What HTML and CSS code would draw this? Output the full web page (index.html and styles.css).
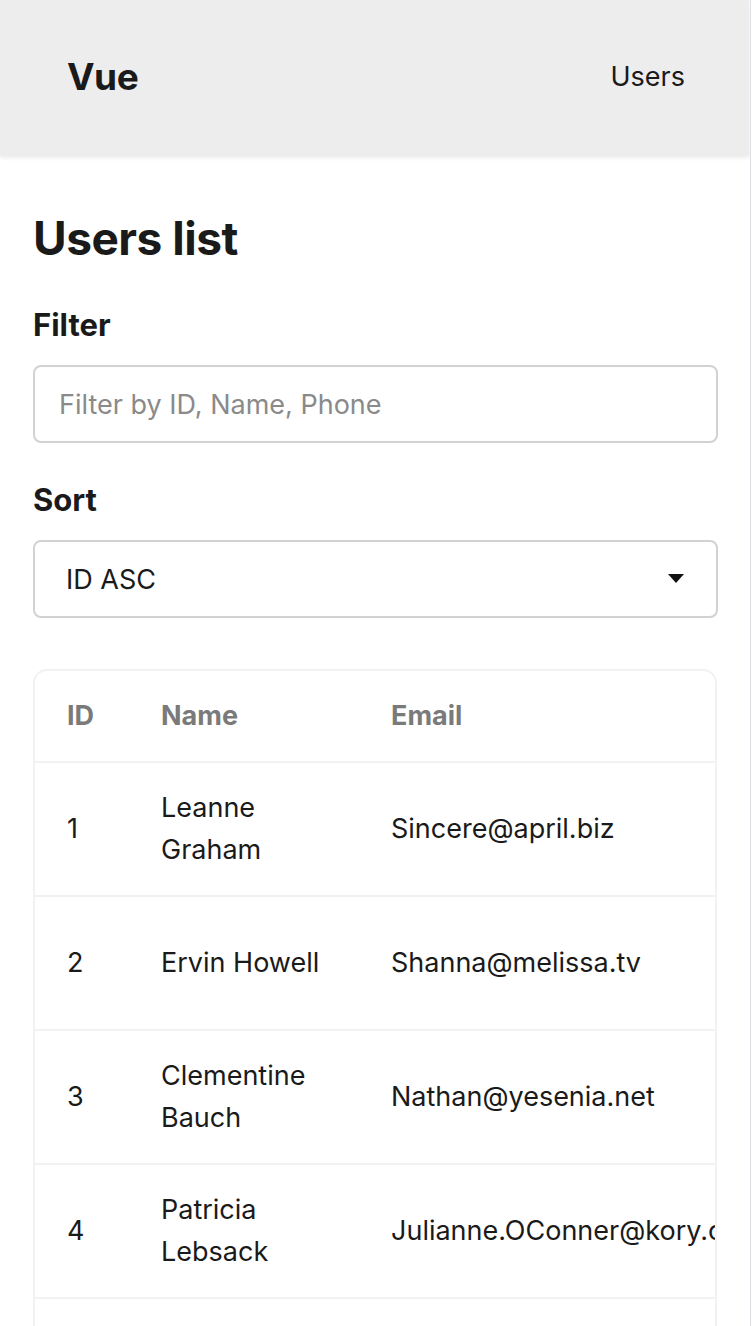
FILE: index.html
```html
<!DOCTYPE html>
<html lang="en">
<head>
<meta charset="utf-8">
<title>Users list</title>
<link rel="stylesheet" href="styles.css">
</head>
<body>
<div class="app">
  <header class="topbar">
    <div class="brand">Vue</div>
    <nav class="nav"><a class="nav-link" href="#">Users</a></nav>
  </header>
  <main class="content">
    <h1 class="title">Users list</h1>
    <div class="field">
      <label class="label" for="filter">Filter</label>
      <input class="input" id="filter" type="text" placeholder="Filter by ID, Name, Phone">
    </div>
    <div class="field">
      <label class="label" for="sort">Sort</label>
      <div class="select" id="sort">
        <span class="select-value">ID ASC</span>
        <svg class="select-arrow" width="16" height="10" viewBox="0 0 16 10"><path d="M0 0H16L8 9Z" fill="#111"/></svg>
      </div>
    </div>
    <div class="table-card">
      <table class="table">
        <colgroup><col class="c-id"><col class="c-name"><col class="c-email"><col class="c-phone"></colgroup>
        <thead>
          <tr><th>ID</th><th>Name</th><th>Email</th><th>Phone</th></tr>
        </thead>
        <tbody>
          <tr><td>1</td><td>Leanne Graham</td><td class="nowrap">Sincere@april.biz</td><td>1-770-736-8031 x56442</td></tr>
          <tr><td>2</td><td>Ervin Howell</td><td class="nowrap">Shanna@melissa.tv</td><td>010-692-6593 x09125</td></tr>
          <tr><td>3</td><td>Clementine Bauch</td><td class="nowrap">Nathan@yesenia.net</td><td>1-463-123-4447</td></tr>
          <tr><td>4</td><td>Patricia Lebsack</td><td class="nowrap">Julianne.OConner@kory.org</td><td>493-170-9623 x156</td></tr>
          <tr><td>5</td><td>Chelsey Dietrich</td><td class="nowrap">Lucio_Hettinger@annie.ca</td><td>(254)954-1289</td></tr>
        </tbody>
      </table>
    </div>
  </main>
</div>
</body>
</html>
```
FILE: styles.css
```css
* { box-sizing: border-box; }
html, body { margin: 0; padding: 0; background: #fff; }
body {
  font-family: Inter, "Noto Sans", sans-serif;
  color: #1a1a1a;
  overflow: hidden;
}
.app {
  width: 751px;
  height: 1326px;
  overflow: hidden;
  border-right: 1px solid #dcdde3;
}
.topbar {
  height: 156px;
  background: #ededed;
  display: flex;
  align-items: center;
  justify-content: space-between;
  padding: 0 64px 4px 67px;
  box-shadow: 0 2px 4px rgba(0,0,0,0.08);
  margin-right: 1px;
}
.brand {
  font-size: 37px;
  font-weight: 700;
  letter-spacing: -0.5px;
}
.nav-link {
  font-size: 27px;
  color: #1a1a1a;
  text-decoration: none;
}
.content {
  padding: 52px 32px 0 33px;
}
.title {
  margin: 0 0 37px;
  font-size: 46px;
  font-weight: 700;
  line-height: 60px;
  letter-spacing: -0.5px;
}
.field { margin-bottom: 37px; }
.label {
  display: block;
  font-size: 31px;
  font-weight: 700;
  line-height: 40px;
  margin-bottom: 20px;
}
.input {
  display: block;
  width: 100%;
  height: 78px;
  margin: 0;
  border: 2px solid #d2d2d2;
  border-radius: 8px;
  padding: 0 24px;
  font-family: inherit;
  font-size: 27px;
  color: #1a1a1a;
  outline: none;
}
.input::placeholder { color: #8a8a8a; }
.select {
  height: 78px;
  border: 2px solid #d2d2d2;
  border-radius: 8px;
  padding: 0 32px 0 31px;
  display: flex;
  align-items: center;
  justify-content: space-between;
  font-size: 27px;
}
.select-arrow { display: block; }
.table-card {
  margin-top: 51px;
  border: 2px solid #f2f2f2;
  border-radius: 14px;
  overflow: hidden;
  width: 684px;
}
.table {
  border-collapse: collapse;
  table-layout: fixed;
  width: 1100px;
  font-size: 27px;
  line-height: 42px;
}
.c-id { width: 94px; }
.c-name { width: 230px; }
.c-email { width: 460px; }
.c-phone { width: 316px; }
.table th, .table td {
  text-align: left;
  vertical-align: middle;
  padding: 24px 32px;
}
.table th {
  color: #7a7a7a;
  font-weight: 700;
}
.table tbody tr { border-top: 2px solid #f2f2f2; }
.table td { color: #1a1a1a; height: 134px; }
.nowrap { white-space: nowrap; }
```
